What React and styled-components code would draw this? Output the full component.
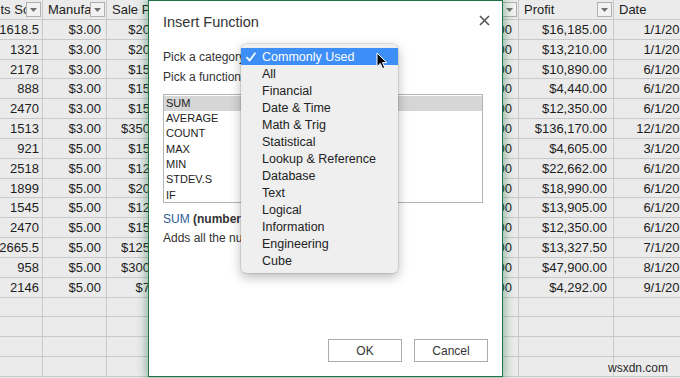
import React from "react";
import styled, { createGlobalStyle } from "styled-components";

const GlobalStyle = createGlobalStyle`
  html, body {
    margin: 0;
    padding: 0;
  }
  body {
    width: 680px;
    height: 378px;
    overflow: hidden;
    background: #ebebeb;
  }
`;

const columns = [
  { title: "Units Sold", width: 67 },
  { title: "Manufacturing Price", width: 64 },
  { title: "Sale Price", width: 68 },
  { title: "Gross Sales", width: 95 },
  { title: "Discounts", width: 70 },
  { title: "Sales", width: 90 },
  { title: "COGS", width: 89 },
  { title: "Profit", width: 95 },
  { title: "Date", width: 84 },
];

const units = [1618.5, 1321, 2178, 888, 2470, 1513, 921, 2518, 1899, 1545, 2470, 2665.5, 958, 2146];
const manuf = [3, 3, 3, 3, 3, 3, 5, 5, 5, 5, 5, 5, 5, 5];
const sale = [20, 20, 15, 15, 15, 350, 15, 12, 20, 12, 15, 125, 300, 7];
const profit = [16185, 13210, 10890, 4440, 12350, 136170, 4605, 22662, 18990, 13905, 12350, 13327.5, 47900, 4292];
const dates = [
  "1/1/2014", "1/1/2014", "6/1/2014", "6/1/2014", "6/1/2014", "12/1/2014", "3/1/2014",
  "6/1/2014", "6/1/2014", "6/1/2014", "6/1/2014", "7/1/2014", "8/1/2014", "9/1/2014",
];

const money = (v) =>
  "$" + v.toLocaleString("en-US", { minimumFractionDigits: 2, maximumFractionDigits: 2 });

const rows = units.map((u, i) => {
  const gross = u * sale[i];
  return [
    { text: String(u), pad: 3 },
    { text: money(manuf[i]), pad: 5 },
    { text: money(sale[i]), pad: 6 },
    { text: money(gross), pad: 6 },
    { text: "$0.00", pad: 6 },
    { text: money(gross), pad: 6 },
    { text: money(gross - profit[i]), pad: 6 },
    { text: money(profit[i]), pad: 6 },
    { text: dates[i], pad: 3 },
  ];
});

const categories = [
  "Commonly Used", "All", "Financial", "Date & Time", "Math & Trig", "Statistical",
  "Lookup & Reference", "Database", "Text", "Logical", "Information", "Engineering", "Cube",
];

const functions = ["SUM", "AVERAGE", "COUNT", "MAX", "MIN", "STDEV.S", "IF"];

const Screen = styled.div`
  position: relative;
  width: 680px;
  height: 378px;
  overflow: hidden;
  background: #ebebeb;
  font-family: "Liberation Sans", Arial, sans-serif;
`;

const Sheet = styled.div`
  display: grid;
  grid-template-columns: ${columns.map((c) => c.width + "px").join(" ")};
  grid-template-rows: 20px repeat(18, 19.83px);
  margin-left: -24px;
  width: max-content;
  font-size: 13px;
  color: #1c1c1c;
`;

const Cell = styled.div`
  box-sizing: border-box;
  border-right: 1px solid #c9c9c9;
  border-bottom: 1px solid #c9c9c9;
  padding: 0 ${(p) => p.$pad || 0}px 0 4px;
  text-align: right;
  line-height: 19px;
  white-space: nowrap;
  overflow: hidden;
`;

const HeadCell = styled.div`
  box-sizing: border-box;
  display: flex;
  align-items: center;
  border-right: 1px solid #c9c9c9;
  border-bottom: 1px solid #c9c9c9;
  padding: 0 1px 0 5px;
  overflow: hidden;
`;

const HeadLabel = styled.span`
  flex: 1;
  min-width: 0;
  white-space: nowrap;
  overflow: hidden;
`;

const FilterButton = styled.span`
  flex: none;
  display: flex;
  align-items: center;
  justify-content: center;
  width: 15px;
  height: 15px;
  box-sizing: border-box;
  border: 1px solid #b0b0b0;
  background: #f2f2f2;
`;

const Dialog = styled.section`
  position: absolute;
  left: 148px;
  top: 0;
  width: 355px;
  height: 377px;
  box-sizing: border-box;
  background: #ffffff;
  border: 1px solid #217346;
  box-shadow: 0 0 9px 2px rgba(33, 115, 70, 0.45);
  padding: 11px 14px 14px 14px;
  display: flex;
  flex-direction: column;
  color: #333;
`;

const TitleBar = styled.header`
  display: flex;
  justify-content: space-between;
  align-items: flex-start;
`;

const Title = styled.h1`
  margin: 0;
  font-size: 14.5px;
  font-weight: normal;
  line-height: 20px;
  color: #333;
`;

const CloseButton = styled.span`
  display: flex;
  margin-top: 3px;
  margin-right: -2px;
`;

const FieldRow = styled.div`
  position: relative;
  margin-top: ${(p) => p.$gap}px;
  font-size: 12px;
  line-height: 16px;
  color: #333;
`;

const Menu = styled.ul`
  position: absolute;
  left: 78px;
  top: -5px;
  width: 157px;
  margin: 0;
  padding: 4px 0;
  list-style: none;
  background: #efefef;
  border-radius: 5px;
  box-shadow: 0 0 0 0.5px rgba(0, 0, 0, 0.18), 0 4px 12px rgba(0, 0, 0, 0.28);
  z-index: 2;
`;

const MenuItem = styled.li`
  display: flex;
  align-items: center;
  height: 17px;
  padding-left: 5px;
  font-size: 12.5px;
  color: ${(p) => (p.$active ? "#ffffff" : "#222")};
  background: ${(p) => (p.$active ? "#3d8ef6" : "transparent")};
`;

const Check = styled.span`
  display: flex;
  align-items: center;
  width: 16px;
  height: 17px;
`;

const Cursor = styled.svg`
  position: absolute;
  left: 135px;
  top: 8px;
`;

const ListBox = styled.ul`
  margin: 9px 5px 0 0;
  padding: 0;
  list-style: none;
  height: 109px;
  box-sizing: border-box;
  border: 1px solid #b4b4b4;
  padding-top: 0.5px;
`;

const ListItem = styled.li`
  height: 15.4px;
  line-height: 15.4px;
  padding-left: 2px;
  font-size: 11px;
  color: #222;
  background: ${(p) => (p.$selected ? "#d6d6d6" : "transparent")};
`;

const Syntax = styled.div`
  margin-top: 8px;
  font-size: 12px;
  line-height: 16px;
  white-space: nowrap;
`;

const FuncName = styled.span`
  color: #2c5d97;
`;

const Args = styled.b`
  color: #333;
`;

const Description = styled.p`
  margin: 3px 0 0;
  font-size: 12px;
  line-height: 16px;
  color: #333;
`;

const Buttons = styled.footer`
  margin-top: auto;
  display: flex;
  justify-content: flex-end;
  gap: 12px;
`;

const Button = styled.button`
  width: 74px;
  height: 23px;
  background: #ffffff;
  border: 1px solid #ababab;
  border-radius: 0;
  font-family: "Liberation Sans", Arial, sans-serif;
  font-size: 12px;
  color: #333;
  padding: 0;
`;

const Watermark = styled.span`
  position: absolute;
  right: 12px;
  bottom: 3px;
  font-size: 12px;
  color: #2a2a2a;
`;

const Caret = () => (
  <svg width="7" height="4" viewBox="0 0 7 4">
    <path d="M0 0 H7 L3.5 4 Z" fill="#707070" />
  </svg>
);

const Tick = () => (
  <svg width="10" height="10" viewBox="0 0 10 10">
    <path
      d="M1 5.6 L3.7 8.6 L9 1.2"
      fill="none"
      stroke="#fff"
      strokeWidth="1.7"
      strokeLinecap="round"
      strokeLinejoin="round"
    />
  </svg>
);

export default function App() {
  return (
    <Screen>
      <GlobalStyle />
      <Sheet>
        {columns.map((c) => (
          <HeadCell key={c.title}>
            <HeadLabel>{c.title}</HeadLabel>
            <FilterButton>
              <Caret />
            </FilterButton>
          </HeadCell>
        ))}
        {rows.map((r, i) =>
          r.map((c, j) => (
            <Cell key={i + "-" + j} $pad={c.pad}>
              {c.text}
            </Cell>
          ))
        )}
        {Array.from({ length: 4 * columns.length }).map((_, i) => (
          <Cell key={"e" + i} />
        ))}
      </Sheet>

      <Dialog>
        <TitleBar>
          <Title>Insert Function</Title>
          <CloseButton>
            <svg width="11" height="11" viewBox="0 0 11 11">
              <path d="M1 1 L10 10 M10 1 L1 10" stroke="#555" strokeWidth="1.6" />
            </svg>
          </CloseButton>
        </TitleBar>

        <FieldRow $gap={17}>
          Pick a category
          <Menu>
            {categories.map((c, i) => (
              <MenuItem key={c} $active={i === 0}>
                <Check>{i === 0 ? <Tick /> : null}</Check>
                {c}
              </MenuItem>
            ))}
            <Cursor width="12" height="18" viewBox="0 0 12 18">
              <path
                d="M1 1 L1 14.5 L4.3 11.4 L6.6 16.6 L8.7 15.7 L6.5 10.6 L10.8 10.6 Z"
                fill="#000"
                stroke="#fff"
                strokeWidth="1"
                strokeLinejoin="round"
              />
            </Cursor>
          </Menu>
        </FieldRow>
        <FieldRow $gap={4}>Pick a function</FieldRow>

        <ListBox>
          {functions.map((f, i) => (
            <ListItem key={f} $selected={i === 0}>
              {f}
            </ListItem>
          ))}
        </ListBox>

        <Syntax>
          <FuncName>SUM</FuncName> <Args>(number1,number2,...)</Args>
        </Syntax>
        <Description>Adds all the numbers in a range of cells.</Description>

        <Buttons>
          <Button>OK</Button>
          <Button>Cancel</Button>
        </Buttons>
      </Dialog>

      <Watermark>wsxdn.com</Watermark>
    </Screen>
  );
}
